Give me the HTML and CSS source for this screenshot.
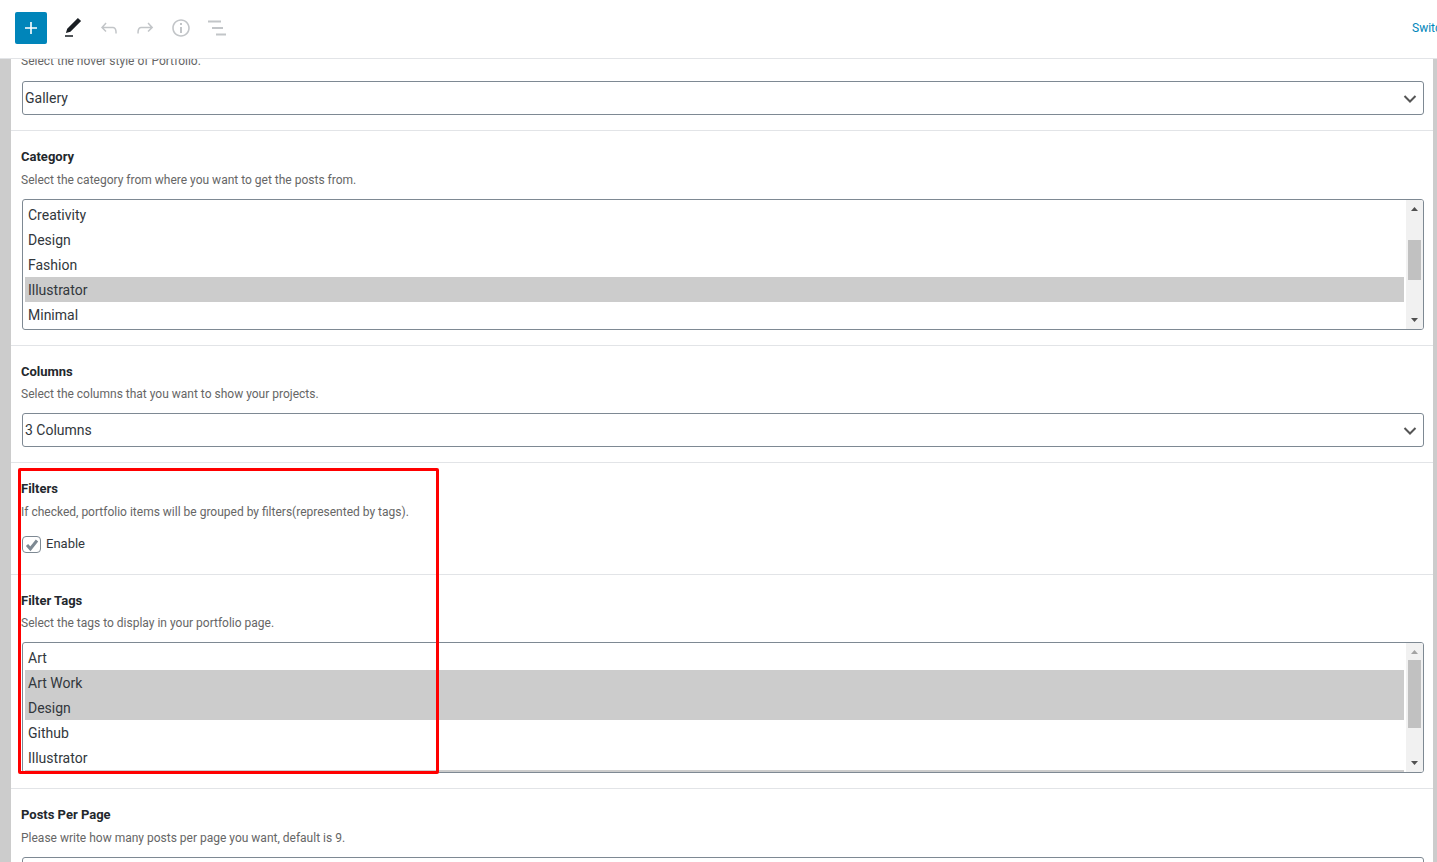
FILE: index.html
```
<!DOCTYPE html>
<html lang="en">
<head>
<meta charset="utf-8">
<title>Portfolio settings</title>
<link rel="stylesheet" href="styles.css">
</head>
<body>
<header class="toolbar">
  <button class="inserter" aria-label="Add block"><svg width="24" height="24" viewBox="0 0 24 24"><path d="M18 11.2h-5.2V6h-1.6v5.2H6v1.6h5.2V18h1.6v-5.2H18z"/></svg></button>
  <svg class="tool tool-edit" width="24" height="24" viewBox="0 0 24 24"><path d="M20.1 5.1L16.9 2 6.2 12.7l-1.3 4.4 4.5-1.3L20.1 5.1zM4 20.8h8v-1.5H4v1.5z"/></svg>
  <svg class="tool" width="24" height="24" viewBox="0 0 24 24"><path d="M18.3 11.7c-.6-.6-1.4-.9-2.3-.9H6.7l2.9-3.3-1.1-1-4.5 5L8.5 16l1-1-2.7-2.7H16c.5 0 .9.2 1.3.5 1 1 1 3.4 1 4.5v.3h1.5v-.2c0-1.5 0-4.3-1.5-5.7z"/></svg>
  <svg class="tool" width="24" height="24" viewBox="0 0 24 24"><path d="M15.6 6.5l-1.1 1 2.9 3.3H8c-.9 0-1.7.3-2.3.9-1.4 1.5-1.4 4.2-1.4 5.6v.2h1.5v-.3c0-1.1 0-3.5 1-4.5.3-.3.7-.5 1.3-.5h9.2L14.5 15l1.1 1.1 4.6-4.6-4.6-5z"/></svg>
  <svg class="tool" width="24" height="24" viewBox="0 0 24 24"><path d="M12 3.2c-4.8 0-8.8 3.9-8.8 8.8 0 4.8 3.9 8.8 8.8 8.8 4.8 0 8.8-3.9 8.8-8.8 0-4.8-4-8.8-8.8-8.8zm0 16c-4 0-7.2-3.3-7.2-7.2C4.8 8 8 4.8 12 4.8s7.2 3.3 7.2 7.2c0 4-3.2 7.2-7.2 7.2zM11 17h2v-6h-2v6zm0-8h2V7h-2v2z"/></svg>
  <svg class="tool" width="24" height="24" viewBox="0 0 24 24"><path d="M3 4.5h13v2H3zM7 11h11v2H7zM11 17.5h10v2H11z"/></svg>
  <a class="switch" href="#">Switch to draft</a>
</header>
<main class="panel">
  <section class="row row-first">
    <p class="desc">Select the hover style of Portfolio.</p>
    <div class="select">Gallery<svg class="chevron" width="24" height="24" viewBox="0 0 24 24"><path d="M6.5 10l5.5 5.5 5.5-5.5" fill="none" stroke="currentColor" stroke-width="2"/></svg></div>
  </section>
  <section class="row">
    <h3 class="label">Category</h3>
    <p class="desc">Select the category from where you want to get the posts from.</p>
    <div class="listbox">
      <ul class="options">
        <li>Creativity</li><li>Design</li><li>Fashion</li><li class="on">Illustrator</li><li>Minimal</li>
      </ul>
      <div class="scrollbar">
        <svg class="arrow" width="17" height="17" viewBox="0 0 17 17"><path d="M8.5 7l3.5 4H5z"/></svg>
        <div class="track"><div class="thumb thumb-a"></div></div>
        <svg class="arrow" width="17" height="17" viewBox="0 0 17 17"><path d="M8.5 10L5 6h7z"/></svg>
      </div>
    </div>
  </section>
  <section class="row">
    <h3 class="label">Columns</h3>
    <p class="desc">Select the columns that you want to show your projects.</p>
    <div class="select">3 Columns<svg class="chevron" width="24" height="24" viewBox="0 0 24 24"><path d="M6.5 10l5.5 5.5 5.5-5.5" fill="none" stroke="currentColor" stroke-width="2"/></svg></div>
  </section>
  <section class="row">
    <h3 class="label">Filters</h3>
    <p class="desc">If checked, portfolio items will be grouped by filters(represented by tags).</p>
    <div class="check-line">
      <span class="checkbox"><svg width="16" height="16" viewBox="0 0 16 16"><path d="M3 8l3.4 3.8L13 3.5" fill="none" stroke="#7e8993" stroke-width="3"/></svg></span>
      <span>Enable</span>
    </div>
  </section>
  <section class="row">
    <h3 class="label">Filter Tags</h3>
    <p class="desc">Select the tags to display in your portfolio page.</p>
    <div class="listbox">
      <ul class="options">
        <li>Art</li><li class="on">Art Work</li><li class="on">Design</li><li>Github</li><li>Illustrator</li><li class="on"></li>
      </ul>
      <div class="scrollbar">
        <svg class="arrow arrow-off" width="17" height="17" viewBox="0 0 17 17"><path d="M8.5 7l3.5 4H5z"/></svg>
        <div class="track"><div class="thumb thumb-b"></div></div>
        <svg class="arrow" width="17" height="17" viewBox="0 0 17 17"><path d="M8.5 10L5 6h7z"/></svg>
      </div>
    </div>
  </section>
  <section class="row">
    <h3 class="label">Posts Per Page</h3>
    <p class="desc">Please write how many posts per page you want, default is 9.</p>
    <div class="select"></div>
  </section>
  <div class="highlight"></div>
</main>
</body>
</html>
```
FILE: styles.css
```
* { box-sizing: border-box; }
html, body { margin: 0; height: 100%; }
body {
  height: 862px;
  overflow: hidden;
  background: #ccc;
  font-family: Roboto, "Noto Sans", sans-serif;
  color: #32373c;
  font-size: 13px;
}
.toolbar {
  position: relative;
  z-index: 2;
  height: 59px;
  display: flex;
  align-items: center;
  gap: 12px;
  padding: 0 0 2px 15px;
  background: #fff;
  border-bottom: 1px solid #e2e4e7;
}
.inserter {
  width: 32px;
  height: 32px;
  margin-right: 2px;
  padding: 4px;
  border: 0;
  border-radius: 2px;
  background: #0085ba;
  display: flex;
}
.inserter svg { fill: #fff; }
.tool { flex: none; fill: #c2c5c8; }
.tool-edit { fill: #191e23; }
.switch {
  margin-left: auto;
  width: 25px;
  overflow: hidden;
  white-space: nowrap;
  color: #0085ba;
  font-size: 12px;
  text-decoration: none;
}
.panel {
  position: relative;
  margin: -8px 4px 0 11px;
  background: #fff;
  height: 811px;
  overflow: hidden;
}
.row {
  padding: 15px 9px 15px 10px;
  border-bottom: 1px solid #e2e4e7;
}
.row-first { padding-top: 0; }
.label {
  margin: 0 0 0.5px;
  font-size: 13px;
  line-height: 22px;
  font-weight: 700;
  color: #23282d;
}
.desc {
  margin: 0 0 8px;
  font-size: 12px;
  line-height: 22px;
  color: #666;
}
.row-first .desc { margin-bottom: 10px; line-height: 20px; }
.select {
  position: relative;
  height: 34px;
  margin-left: 1px;
  padding-left: 2px;
  border: 1px solid #7e8993;
  border-radius: 3px;
  font-size: 14px;
  line-height: 32px;
  background: #fff;
}
.chevron { position: absolute; right: 1px; top: 4px; color: #555; }
.listbox {
  display: flex;
  height: 131px;
  margin-left: 1px;
  border: 1px solid #7e8993;
  border-radius: 3px;
  overflow: hidden;
  font-size: 14px;
}
.options {
  flex: 1;
  list-style: none;
  margin: 0;
  padding: 2px 2px 0;
  overflow: hidden;
}
.options li {
  height: 25px;
  line-height: 27px;
  padding-left: 3px;
}
.options .on { background: #ccc; }
.scrollbar {
  flex: none;
  width: 17px;
  display: flex;
  flex-direction: column;
  background: #f1f1f1;
}
.arrow { flex: none; fill: #505050; }
.arrow-off { fill: #a3a3a3; }
.track { flex: 1; padding: 0 2px 0 2px; }
.thumb { background: #c1c1c1; }
.thumb-a { margin-top: 23px; height: 40px; }
.thumb-b { margin-top: 0; height: 68px; }
.check-line {
  display: flex;
  align-items: center;
  gap: 5px;
  margin: 11px 0 5.4px 1px;
  font-size: 13px;
  height: 20px;
}
.checkbox {
  width: 19px;
  height: 17px;
  margin-top: 2px;
  border: 1px solid #7e8993;
  border-radius: 4px;
  display: flex;
  align-items: center;
  justify-content: center;
}
.highlight {
  position: absolute;
  left: 7px;
  top: 417px;
  width: 421px;
  height: 306px;
  border: 3px solid #f00;
  border-radius: 2px;
}
```
